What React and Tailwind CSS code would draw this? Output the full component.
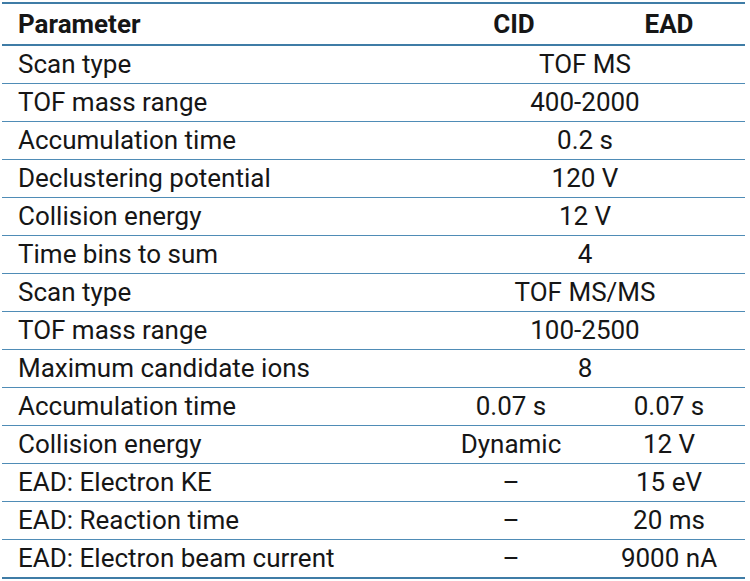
const rows = [
  { name: "Scan type", span: "TOF MS" },
  { name: "TOF mass range", span: "400-2000" },
  { name: "Accumulation time", span: "0.2 s" },
  { name: "Declustering potential", span: "120 V" },
  { name: "Collision energy", span: "12 V" },
  { name: "Time bins to sum", span: "4" },
  { name: "Scan type", span: "TOF MS/MS" },
  { name: "TOF mass range", span: "100-2500" },
  { name: "Maximum candidate ions", span: "8" },
  { name: "Accumulation time", cid: "0.07 s", ead: "0.07 s" },
  { name: "Collision energy", cid: "Dynamic", ead: "12 V" },
  { name: "EAD: Electron KE", cid: "–", ead: "15 eV" },
  { name: "EAD: Reaction time", cid: "–", ead: "20 ms" },
  { name: "EAD: Electron beam current", cid: "–", ead: "9000 nA" },
];

export default function App() {
  return (
    <div
      className="bg-white w-[750px] h-[581px] pt-[2px] pl-[2px] text-[#161616] text-[26px] leading-none"
      style={{ fontFamily: "Roboto, 'Liberation Sans', sans-serif" }}
    >
      <table className="w-[743px] border-collapse table-fixed">
        <colgroup>
          <col className="w-[423px]" />
          <col className="w-[170px]" />
          <col className="w-[150px]" />
        </colgroup>
        <thead>
          <tr className="h-[42px] border-t-2 border-b-2 border-[#3f7ca6]">
            <th className="text-left font-bold pl-4">Parameter</th>
            <th className="text-center font-bold pl-[8px]">CID</th>
            <th className="text-center font-bold pr-[2px]">EAD</th>
          </tr>
        </thead>
        <tbody>
          {rows.map((r, i) => (
            <tr
              key={i}
              className={
                i === rows.length - 1
                  ? "h-[39px] border-b-2 border-[#3f7ca6]"
                  : "h-[38px] border-b border-[#4f8cb6]"
              }
            >
              <td className="pl-4">{r.name}</td>
              {r.span ? (
                <td colSpan={2} className="text-center">
                  {r.span}
                </td>
              ) : (
                <>
                  <td className="text-center pl-[2px]">{r.cid}</td>
                  <td className="text-center pr-[2px]">{r.ead}</td>
                </>
              )}
            </tr>
          ))}
        </tbody>
      </table>
    </div>
  );
}
